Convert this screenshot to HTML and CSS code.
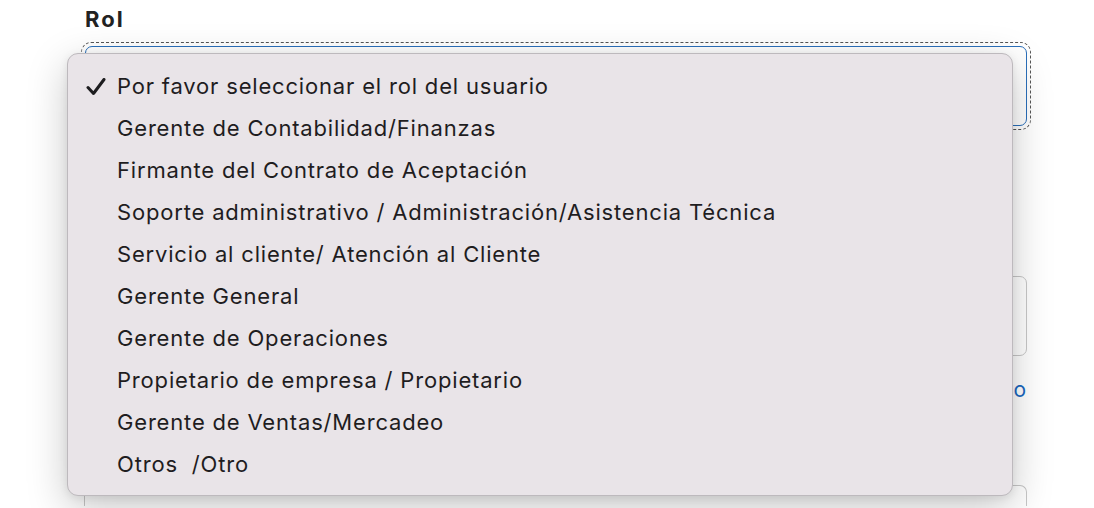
FILE: index.html
```html
<!DOCTYPE html>
<html lang="es">
<head>
<meta charset="utf-8">
<title>Rol</title>
<link rel="stylesheet" href="styles.css">
</head>
<body>
<div class="form">
  <label class="label">Rol</label>
  <div class="focus-ring">
    <div class="select">
      <span class="chev"></span>
    </div>
  </div>
  <div class="spacer1"></div>
  <div class="input"></div>
  <div class="link-row"><a class="link">Cambiar usuario</a></div>
  <div class="input last"></div>

  <ul class="menu">
    <li class="item checked"><svg class="check" viewBox="0 0 20 18" width="20" height="18"><path d="M2 9.5 L7.5 15.5 L18 1.5" fill="none" stroke="#1d1d1f" stroke-width="3" stroke-linecap="round" stroke-linejoin="round"/></svg><span>Por favor seleccionar el rol del usuario</span></li>
    <li class="item"><span>Gerente de Contabilidad/Finanzas</span></li>
    <li class="item"><span>Firmante del Contrato de Aceptación</span></li>
    <li class="item"><span>Soporte administrativo / Administración/Asistencia Técnica</span></li>
    <li class="item"><span>Servicio al cliente/ Atención al Cliente</span></li>
    <li class="item"><span>Gerente General</span></li>
    <li class="item"><span>Gerente de Operaciones</span></li>
    <li class="item"><span>Propietario de empresa / Propietario</span></li>
    <li class="item"><span>Gerente de Ventas/Mercadeo</span></li>
    <li class="item"><span>Otros &nbsp;/Otro</span></li>
  </ul>
</div>
</body>
</html>
```

FILE: styles.css
```css
html, body {
  margin: 0;
  padding: 0;
  background: #ffffff;
  font-family: "Inter", "Liberation Sans", Arial, sans-serif;
  color: #1d1d1f;
  overflow: hidden;
  height: 508px;
}
.form {
  position: relative;
  margin-left: 84px;
  width: 944px;
  padding-top: 4px;
  display: flex;
  flex-direction: column;
}
.label {
  font-size: 22px;
  font-weight: 700;
  letter-spacing: 2px;
  line-height: 30px;
  padding-left: 1px;
  color: #222;
}
.focus-ring {
  flex: none;
  margin-top: 8px;
  margin-left: -3px;
  margin-right: -3px;
  padding: 3px;
  border: 1px dashed #555;
  border-radius: 10px;
}
.select {
  position: relative;
  height: 78px;
  border: 1px solid #2a6fba;
  border-radius: 7px;
  background: #ffffff;
}
.chev {
  position: absolute;
  right: 13px;
  top: 33px;
  width: 3px;
  height: 3px;
  background: #333;
  border-radius: 50%;
}
.spacer1 {
  flex: none;
  height: 146px;
}
.input {
  flex: none;
  height: 78px;
  border: 1px solid #c8c8c8;
  border-radius: 7px;
  background: #ffffff;
  margin-right: 1px;
}
.link-row {
  flex: none;
  display: flex;
  justify-content: flex-end;
  height: 40px;
  padding-top: 22px;
  margin-right: 1px;
}
.link {
  font-size: 21px;
  color: #1a68c0;
  line-height: 24px;
  letter-spacing: 0.8px;
}
.input.last {
  margin-top: 67px;
  height: 20px;
  border-bottom: none;
  border-bottom-left-radius: 0;
  border-bottom-right-radius: 0;
}
.menu {
  position: absolute;
  left: -17px;
  top: 53px;
  width: 946px;
  margin: 0;
  padding: 11px 0 10px;
  list-style: none;
  background: #e9e4e8;
  border: 1px solid #bdb9bd;
  border-radius: 11px;
  box-shadow: 0 12px 40px rgba(0, 0, 0, 0.22), 0 2px 8px rgba(0, 0, 0, 0.08);
  box-sizing: border-box;
}
.item {
  position: relative;
  height: 42px;
  display: flex;
  align-items: center;
  padding-left: 49px;
  font-size: 22px;
  letter-spacing: 0.82px;
  color: #1f1d1f;
  white-space: pre;
}
.check {
  position: absolute;
  left: 18px;
  top: 13px;
}
```
